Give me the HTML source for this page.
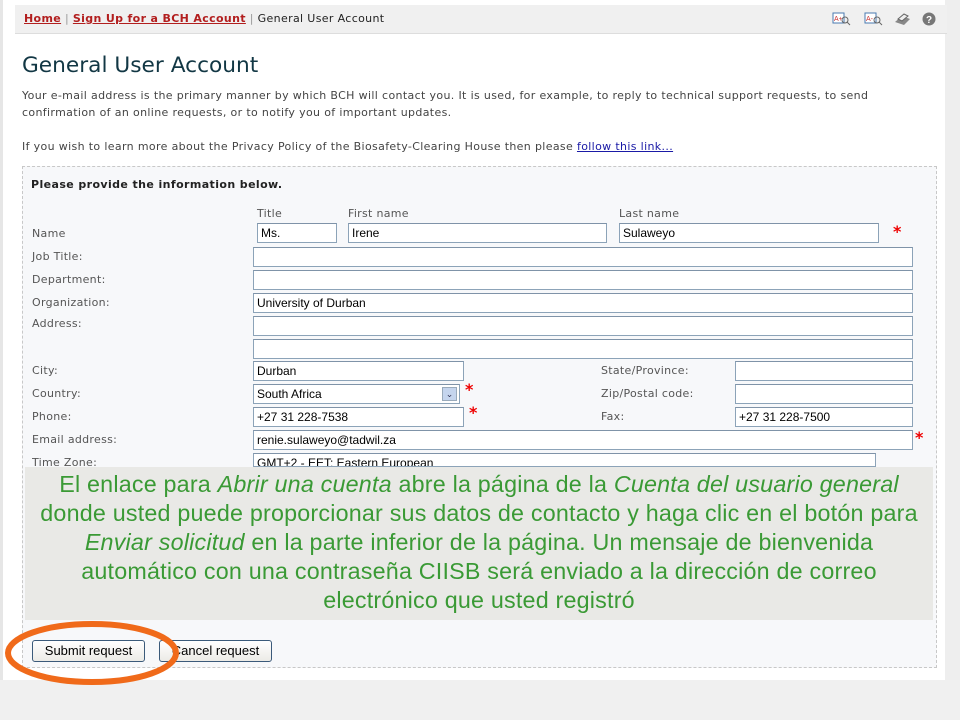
<!DOCTYPE html>
<html><head><meta charset="utf-8"><style>
*{margin:0;padding:0;box-sizing:border-box}
body{width:960px;height:720px;background:#fff;position:relative;overflow:hidden;font-family:"DejaVu Sans",Verdana,sans-serif;font-size:11px;color:#444}
.a{position:absolute;white-space:nowrap}
.p{letter-spacing:.35px}
.in{position:absolute;background:#fff;border:1px solid #8ca3b8;border-top-color:#7f93a8;height:20px;font-family:"Liberation Sans",Arial,sans-serif;font-size:12px;color:#000;padding:2px 3px;line-height:15px}
.lb{position:absolute;font-size:11px;color:#555;letter-spacing:.3px}
.st{position:absolute;color:#e00;font-size:16px;font-weight:bold}
.btn{position:absolute;height:22px;border:1px solid #3b5a7a;border-radius:3px;background:linear-gradient(#fff,#ecebe6);font-family:"Liberation Sans",Arial,sans-serif;font-size:13px;color:#000;text-align:center;line-height:20px}
</style></head><body>
<div class="a" style="left:0;top:0;width:3px;height:680px;background:#e6e6e6"></div>
<div class="a" style="left:945px;top:0;width:15px;height:720px;background:#eeeeee"></div>
<div class="a" style="left:0;top:680px;width:960px;height:40px;background:#f0f0f0"></div>
<div class="a" style="left:15px;top:5px;width:932px;height:29px;background:#f0f0f0;border-bottom:1px solid #ddd"></div>
<div class="a p" style="left:24px;top:12px;font-size:11px;color:#222"><b style="color:#b21e1e;text-decoration:underline">Home</b> <span style="color:#999">|</span> <b style="color:#b21e1e;text-decoration:underline">Sign Up for a BCH Account</b> <span style="color:#999">|</span> General User Account</div>
<svg class="a" style="left:830px;top:10px" width="110" height="20">
<rect x="3" y="3" width="11" height="10" fill="#fff" stroke="#4a7ab0"/><text x="4" y="11" font-size="7" fill="#c33" font-family="Liberation Sans">A+</text><circle cx="15" cy="10" r="3" fill="none" stroke="#666"/><line x1="17" y1="12" x2="20" y2="15" stroke="#666"/>
<rect x="35" y="3" width="11" height="10" fill="#fff" stroke="#4a7ab0"/><text x="36" y="11" font-size="7" fill="#c33" font-family="Liberation Sans">A-</text><circle cx="47" cy="10" r="3" fill="none" stroke="#666"/><line x1="49" y1="12" x2="52" y2="15" stroke="#666"/>
<path d="M65 12 L72 6 L80 9 L74 15 Z" fill="#888"/><path d="M68 9 L74 4 L78 6 L72 11Z" fill="#eee" stroke="#666"/>
<circle cx="99" cy="9" r="6.5" fill="#777"/><text x="96" y="13" font-size="10" font-weight="bold" fill="#fff" font-family="Liberation Sans">?</text>
</svg>
<div class="a" style="left:22px;top:53px;font-size:21.7px;color:#123744">General User Account</div>
<div class="a p" style="left:22px;top:89px">Your e-mail address is the primary manner by which BCH will contact you. It is used, for example, to reply to technical support requests, to send</div>
<div class="a p" style="left:22px;top:106px">confirmation of an online requests, or to notify you of important updates.</div>
<div class="a p" style="left:22px;top:140px">If you wish to learn more about the Privacy Policy of the Biosafety-Clearing House then please <span style="color:#1a1aa6;text-decoration:underline">follow this link...</span></div>
<div class="a" style="left:22px;top:166px;width:915px;height:502px;border:1px dashed #c8c8c8;background:#f7f8fa"></div>
<div class="a" style="left:31px;top:178px;font-weight:bold;color:#222;letter-spacing:.4px">Please provide the information below.</div>
<div class="lb" style="left:257px;top:207px">Title</div><div class="lb" style="left:348px;top:207px">First name</div><div class="lb" style="left:619px;top:207px">Last name</div>
<div class="lb" style="left:32px;top:227px">Name</div>
<div class="lb" style="left:32px;top:250px">Job Title:</div>
<div class="lb" style="left:32px;top:273px">Department:</div>
<div class="lb" style="left:32px;top:296px">Organization:</div>
<div class="lb" style="left:32px;top:317px">Address:</div>
<div class="lb" style="left:32px;top:364px">City:</div>
<div class="lb" style="left:32px;top:387px">Country:</div>
<div class="lb" style="left:32px;top:410px">Phone:</div>
<div class="lb" style="left:32px;top:433px">Email address:</div>
<div class="lb" style="left:601px;top:364px">State/Province:</div>
<div class="lb" style="left:601px;top:387px">Zip/Postal code:</div>
<div class="lb" style="left:601px;top:410px">Fax:</div>
<div class="in" style="left:257px;top:223px;width:80px">Ms.</div>
<div class="in" style="left:348px;top:223px;width:259px">Irene</div>
<div class="in" style="left:619px;top:223px;width:260px">Sulaweyo</div>
<div class="st" style="left:893px;top:222px">*</div>
<div class="in" style="left:253px;top:247px;width:660px"></div>
<div class="in" style="left:253px;top:270px;width:660px"></div>
<div class="in" style="left:253px;top:293px;width:660px">University of Durban</div>
<div class="in" style="left:253px;top:316px;width:660px"></div>
<div class="in" style="left:253px;top:339px;width:660px"></div>
<div class="in" style="left:253px;top:361px;width:211px">Durban</div>
<div class="in" style="left:735px;top:361px;width:178px"></div>
<div class="in" style="left:253px;top:384px;width:207px">South Africa<span style="position:absolute;right:2px;top:2px;width:15px;height:14px;background:#c5d5ee;border:1px solid #9ab;font-size:9px;text-align:center;line-height:12px;color:#335">&#8964;</span></div>
<div class="st" style="left:465px;top:380px">*</div>
<div class="in" style="left:735px;top:384px;width:178px"></div>
<div class="in" style="left:253px;top:407px;width:211px">+27 31 228-7538</div>
<div class="st" style="left:469px;top:403px">*</div>
<div class="in" style="left:735px;top:407px;width:178px">+27 31 228-7500</div>
<div class="in" style="left:253px;top:430px;width:660px">renie.sulaweyo@tadwil.za</div>
<div class="st" style="left:915px;top:428px">*</div>
<div class="in" style="left:253px;top:453px;width:623px;height:14px;overflow:hidden">GMT+2 - EET: Eastern European</div>
<div class="lb" style="left:32px;top:456px;height:11px;overflow:hidden">Time Zone:</div>
<div class="a" style="left:25px;top:467px;width:908px;height:153px;background:#e9e9e6;color:#3a9a35;font-family:'Liberation Sans',Arial,sans-serif;font-size:23.3px;line-height:29px;text-align:center;padding-top:3px;letter-spacing:.2px">El enlace para <i>Abrir una cuenta</i> abre la página de la <i>Cuenta del usuario general</i><br>donde usted puede proporcionar sus datos de contacto y haga clic en el botón para<br><i>Enviar solicitud</i> en la parte inferior de la página. Un mensaje de bienvenida<br>automático con una contraseña CIISB será enviado a la dirección de correo<br>electrónico que usted registró</div>
<div class="btn" style="left:32px;top:640px;width:113px">Submit request</div>
<div class="btn" style="left:159px;top:640px;width:113px">Cancel request</div>
<svg class="a" style="left:0;top:610px" width="200" height="80"><ellipse cx="92" cy="43" rx="84" ry="29" fill="none" stroke="#f06a1a" stroke-width="6"/></svg>
</body></html>
